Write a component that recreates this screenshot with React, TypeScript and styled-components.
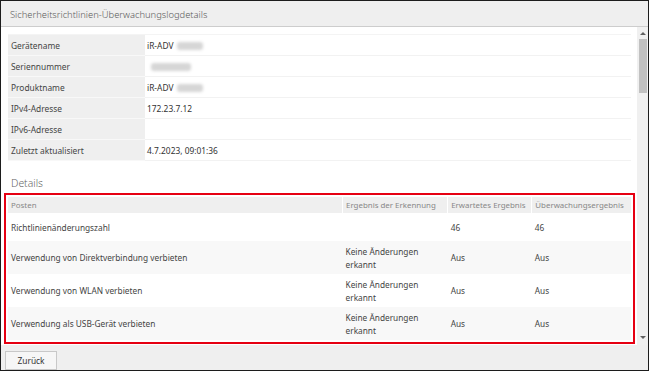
import styled, { createGlobalStyle } from 'styled-components'

const GlobalStyle = createGlobalStyle`
  html, body {
    margin: 0;
    padding: 0;
    background: #fff;
  }
  * {
    box-sizing: border-box;
  }
`

const Fenster = styled.div`
  width: 649px;
  height: 371px;
  border: 1px solid #1c1c1c;
  display: flex;
  flex-direction: column;
  font-family: 'Noto Sans', 'Open Sans', sans-serif;
  color: #444;
  background: #fff;
  overflow: hidden;
`

const Kopf = styled.header`
  height: 26px;
  flex: none;
  background: #efefef;
  border-bottom: 1px solid #cdcdcd;
  padding: 2px 9px 0;
  display: flex;
  align-items: center;
  font-size: 9.4px;
  font-weight: 300;
  color: #5a5a5a;
`

const Rumpf = styled.div`
  flex: 1;
  display: flex;
  min-height: 0;
`

const Inhalt = styled.div`
  flex: 1;
  overflow: hidden;
  padding: 7px 6px 0 7px;
`

const Bildlaufleiste = styled.div`
  width: 11px;
  flex: none;
  background: #f0f0f0;
  display: flex;
  flex-direction: column;
  align-items: center;
`

const Pfeil = styled.div<{ $unten?: boolean }>`
  width: 0;
  height: 0;
  margin: ${(p) => (p.$unten ? 'auto 0 6px' : '5px 0 3px')};
  border-left: 3px solid transparent;
  border-right: 3px solid transparent;
  ${(p) => (p.$unten ? 'border-top: 3px solid #606060;' : 'border-bottom: 3px solid #606060;')}
`

const Daumen = styled.div`
  width: 8px;
  height: 54px;
  margin-top: 1px;
  background: #c1c1c1;
`

const InfoTabelle = styled.table`
  width: 100%;
  border-collapse: collapse;
  font-size: 8.4px;
  border-top: 1px solid #f4f4f4;
`

const InfoZeile = styled.tr`
  height: 21px;
  border-bottom: 1px solid #f2f2f2;
`

const Bezeichnung = styled.td`
  width: 137px;
  background: #efefef;
  padding: 0 3px;
  color: #444;
  border-bottom: 1px solid #f8f8f8;
`

const Wert = styled.td`
  padding: 0 2px;
  color: #333;
`

const Unkenntlich = styled.span<{ $breite: number }>`
  display: inline-block;
  vertical-align: middle;
  width: ${(p) => p.$breite}px;
  height: 8px;
  margin-left: 4px;
  background: #d6d6d6;
  border-radius: 3px;
  filter: blur(1.5px);
`

const Abschnitt = styled.h2`
  margin: 14px 0 0;
  padding-left: 3px;
  font-size: 10.4px;
  line-height: 16px;
  font-weight: 300;
  color: #666;
`

const Markierung = styled.div`
  margin-top: 6px;
  outline: 2px solid #e60012;
  outline-offset: 2px;
`

const DetailTabelle = styled.table`
  width: 100%;
  border-collapse: collapse;
  table-layout: fixed;
  font-size: 8.3px;
`

const KopfZelle = styled.th<{ $breite: number }>`
  width: ${(p) => p.$breite}px;
  height: 16px;
  padding: 0 3px;
  background: #efefef;
  border-left: 1px solid #fff;
  text-align: left;
  font-size: 7.9px;
  font-weight: normal;
  color: #888;
  white-space: nowrap;
  overflow: hidden;
  &:first-child {
    border-left: none;
  }
`

const DetailZeile = styled.tr<{ $grau: boolean }>`
  height: 28px;
  background: ${(p) => (p.$grau ? '#f8f8f8' : '#fff')};
`

const Zelle = styled.td`
  padding: 3.5px 3px;
  line-height: 13px;
  color: #444;
  vertical-align: middle;
`

const Fuss = styled.footer`
  height: 25px;
  flex: none;
  background: #efefef;
  padding: 2px 4px 0;
`

const Knopf = styled.button`
  width: 52px;
  height: 19px;
  padding: 0;
  border: 1px solid #c8c8c8;
  background: #f6f6f6;
  font-family: inherit;
  font-size: 8.4px;
  color: #333;
`

const info: { label: string; wert: string; verdeckt?: number }[] = [
  { label: 'Gerätename', wert: 'iR-ADV', verdeckt: 26 },
  { label: 'Seriennummer', wert: '', verdeckt: 40 },
  { label: 'Produktname', wert: 'iR-ADV', verdeckt: 26 },
  { label: 'IPv4-Adresse', wert: '172.23.7.12' },
  { label: 'IPv6-Adresse', wert: '' },
  { label: 'Zuletzt aktualisiert', wert: '4.7.2023, 09:01:36' }
]

const details = [
  { posten: 'Richtlinienänderungszahl', ergebnis: '', erwartet: '46', ueberwachung: '46' },
  { posten: 'Verwendung von Direktverbindung verbieten', ergebnis: 'Keine Änderungen erkannt', erwartet: 'Aus', ueberwachung: 'Aus' },
  { posten: 'Verwendung von WLAN verbieten', ergebnis: 'Keine Änderungen erkannt', erwartet: 'Aus', ueberwachung: 'Aus' },
  { posten: 'Verwendung als USB-Gerät verbieten', ergebnis: 'Keine Änderungen erkannt', erwartet: 'Aus', ueberwachung: 'Aus' }
]

const App = () => (
  <>
    <GlobalStyle />
    <Fenster>
      <Kopf>Sicherheitsrichtlinien-Überwachungslogdetails</Kopf>
      <Rumpf>
        <Inhalt>
          <InfoTabelle>
            <tbody>
              {info.map((zeile) => (
                <InfoZeile key={zeile.label}>
                  <Bezeichnung>{zeile.label}</Bezeichnung>
                  <Wert>
                    {zeile.wert}
                    {zeile.verdeckt && <Unkenntlich $breite={zeile.verdeckt} />}
                  </Wert>
                </InfoZeile>
              ))}
            </tbody>
          </InfoTabelle>

          <Abschnitt>Details</Abschnitt>
          <Markierung>
            <DetailTabelle>
              <thead>
                <tr>
                  <KopfZelle $breite={334}>Posten</KopfZelle>
                  <KopfZelle $breite={105}>Ergebnis der Erkennung</KopfZelle>
                  <KopfZelle $breite={84}>Erwartetes Ergebnis</KopfZelle>
                  <KopfZelle $breite={99}>Überwachungsergebnis</KopfZelle>
                </tr>
              </thead>
              <tbody>
                {details.map((d, i) => (
                  <DetailZeile key={d.posten} $grau={i % 2 === 1}>
                    <Zelle>{d.posten}</Zelle>
                    <Zelle>{d.ergebnis}</Zelle>
                    <Zelle>{d.erwartet}</Zelle>
                    <Zelle>{d.ueberwachung}</Zelle>
                  </DetailZeile>
                ))}
              </tbody>
            </DetailTabelle>
          </Markierung>
        </Inhalt>
        <Bildlaufleiste>
          <Pfeil />
          <Daumen />
          <Pfeil $unten />
        </Bildlaufleiste>
      </Rumpf>
      <Fuss>
        <Knopf>Zurück</Knopf>
      </Fuss>
    </Fenster>
  </>
)

export default App
